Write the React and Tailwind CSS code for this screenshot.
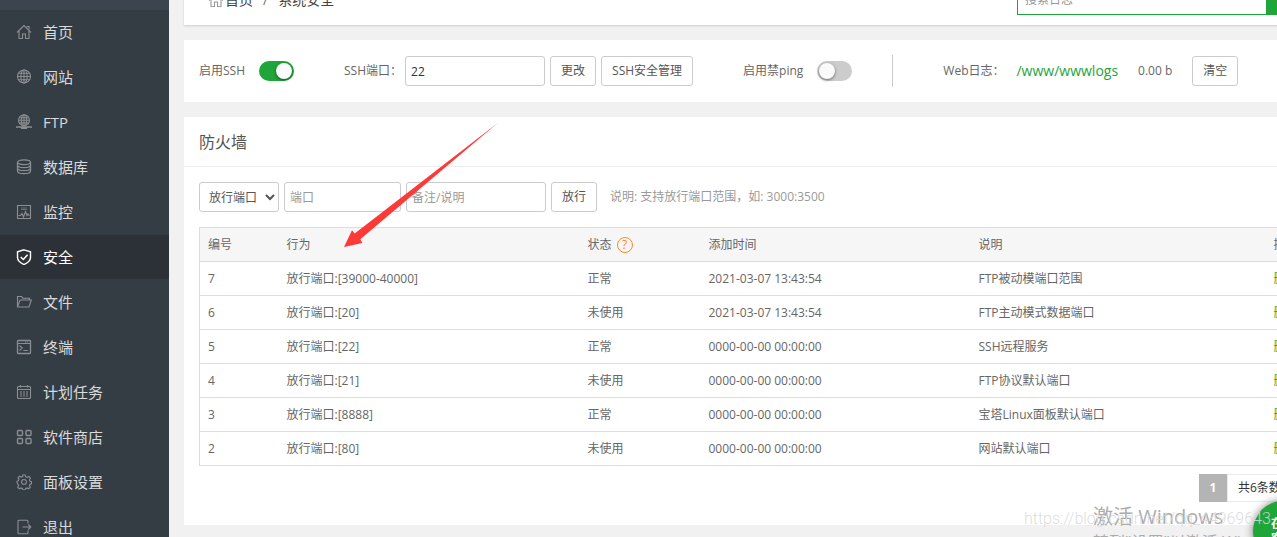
import React from 'react';
import clsx from 'clsx';

const NavIcon = ({ name }) => {
  const shapes = {
    home: (
      <>
        <path d="M1 8.500 8 1.500 15 8.500" />
        <path d="M3 7v7.500h3.500v-4.500h3v4.500H13V7M10.500 2.500H13v3" />
      </>
    ),
    site: (
      <>
        <circle cx="8" cy="7.500" r="6.500" />
        <ellipse cx="8" cy="7.500" rx="3.200" ry="6.500" />
        <path d="M1.500 7.500h13M8 1v13M2.500 4.300h11M2.500 10.700h11" />
      </>
    ),
    ftp: (
      <>
        <circle cx="8" cy="6.300" r="5.500" />
        <ellipse cx="8" cy="6.300" rx="2.700" ry="5.500" />
        <path d="M2.700 6.300h10.600M8 1v11M3.500 3.800h9M3.500 8.900h9" />
        <path d="M0 13h16M5 14.200h6" strokeWidth="1.500" />
      </>
    ),
    database: (
      <g strokeWidth="1.300">
        <ellipse cx="8" cy="3.200" rx="6.500" ry="2.400" />
        <path d="M1.500 3.200v9c0 1.300 2.900 2.400 6.500 2.400s6.500-1.100 6.500-2.400v-9" />
        <path d="M1.500 6.200c0 1.300 2.900 2.400 6.500 2.400s6.500-1.100 6.500-2.400M1.500 9.200c0 1.300 2.900 2.400 6.500 2.400s6.500-1.100 6.500-2.400" />
      </g>
    ),
    monitor: (
      <>
        <path d="M1.500 1.500h13v13h-13z" />
        <path d="M5 4h6M5 5.500h6" opacity=".6" />
        <path d="M2.500 11.500h2l1.500-2 1.500 3.500 2-5.500 1.500 4 1-1.500 1.500 2" />
      </>
    ),
    shield: (
      <>
        <path d="M8 .8 14.500 2.800v5.700c0 3.200-2.700 5.300-6.500 7.100-3.800-1.800-6.500-3.900-6.500-7.100V2.800z" strokeWidth="1.400" />
        <path d="m4.700 8 2.600 2.500 4.300-4.800" strokeWidth="1.500" />
      </>
    ),
    folder: (
      <path d="M1.500 13V2.500h4l1.300 1.700h6.700V6M1.500 13 4 6h11.300L13 13z" />
    ),
    terminal: (
      <>
        <rect x="1.500" y="1.500" width="13" height="13" rx=".8" strokeWidth="1.300" />
        <path d="M1.500 4.500h13M3.500 6.500 6.300 9l-2.800 2.500M7.300 11.500h4.500M9 3h1M11 3h1" />
      </>
    ),
    calendar: (
      <>
        <rect x="1.500" y="2.500" width="13" height="12" rx="1" />
        <path d="M1.500 5.500h13M4.500 1v2.500M11.500 1v2.500" />
        <path d="M4 8h8M4 10h8M4 12h8" strokeDasharray="2 1" />
      </>
    ),
    apps: (
      <g strokeWidth="1.400">
        <rect x="1.500" y="1.500" width="5" height="5" rx="1" />
        <rect x="10" y="1.500" width="5" height="5" rx="1" />
        <rect x="1.500" y="9.500" width="5" height="5" rx="1" />
        <rect x="10" y="9.500" width="5" height="5" rx="1" />
      </g>
    ),
    gear: (
      <>
        <path d="M6.800 1h2.400l.5 1.800 1.400.6 1.700-.9 1.600 1.700-.9 1.600.5 1.400 1.500.4v2.200l-1.500.5-.6 1.300.9 1.600-1.600 1.600-1.600-.9-1.400.6-.5 1.600H6.800l-.5-1.600-1.400-.6-1.600.9-1.600-1.600.9-1.600-.6-1.300L1 8.900V7.300l1.300-.5.6-1.400L2 3.800l1.600-1.600 1.600.9 1.400-.6z" />
        <circle cx="8" cy="7.900" r="2.400" />
      </>
    ),
    exit: (
      <path d="M12 4.500V2.200a1 1 0 0 0-1-1H3a1 1 0 0 0-1 1v11.600a1 1 0 0 0 1 1h8a1 1 0 0 0 1-1v-2.300M6.500 8h8.300M12.300 5.500 14.800 8l-2.500 2.500" />
    ),
  };
  return (
    <svg viewBox="0 0 16 16" className="size-4 shrink-0" fill="none" stroke="currentColor" strokeWidth="1.1" aria-hidden="true">
      {shapes[name]}
    </svg>
  );
};

const navItems = [
  { icon: 'home', label: '首页' },
  { icon: 'site', label: '网站' },
  { icon: 'ftp', label: 'FTP' },
  { icon: 'database', label: '数据库' },
  { icon: 'monitor', label: '监控' },
  { icon: 'shield', label: '安全', active: true },
  { icon: 'folder', label: '文件' },
  { icon: 'terminal', label: '终端' },
  { icon: 'calendar', label: '计划任务' },
  { icon: 'apps', label: '软件商店' },
  { icon: 'gear', label: '面板设置' },
  { icon: 'exit', label: '退出' },
];

const rules = [
  { id: 7, port: '39000-40000', status: '正常', time: '2021-03-07 13:43:54', note: 'FTP被动模端口范围' },
  { id: 6, port: '20', status: '未使用', time: '2021-03-07 13:43:54', note: 'FTP主动模式数据端口' },
  { id: 5, port: '22', status: '正常', time: '0000-00-00 00:00:00', note: 'SSH远程服务' },
  { id: 4, port: '21', status: '未使用', time: '0000-00-00 00:00:00', note: 'FTP协议默认端口' },
  { id: 3, port: '8888', status: '正常', time: '0000-00-00 00:00:00', note: '宝塔Linux面板默认端口' },
  { id: 2, port: '80', status: '未使用', time: '0000-00-00 00:00:00', note: '网站默认端口' },
];

const Button = ({ children, className }) => (
  <button type="button" className={clsx('h-[30px] shrink-0 rounded-[3px] border border-[#ccc] bg-white px-2.5 text-[#555] hover:bg-gray-100', className)}>
    {children}
  </button>
);

const Switch = ({ id, defaultChecked }) => (
  <input
    id={id}
    type="checkbox"
    role="switch"
    defaultChecked={defaultChecked}
    className="relative ml-3.5 h-5 w-[35px] shrink-0 cursor-pointer appearance-none rounded-full bg-[#ccc] before:absolute before:top-0.5 before:left-0.5 before:size-4 before:rounded-full before:bg-[#fafafa] before:shadow-[0_1px_3px_rgba(0,0,0,0.5)] checked:bg-[#20a53a] checked:before:left-[17px]"
  />
);

const inputStyle = 'h-[30px] shrink-0 rounded-[3px] border border-[#ccc] bg-white px-[5px] placeholder:text-[#999]';

const Sidebar = () => (
  <aside className="w-[169px] shrink-0 border-t-[10px] border-[#3c444d] bg-[#353d44]">
    <nav className="flex flex-col gap-px">
      {navItems.map((item) => (
        <a
          key={item.label}
          href="#"
          className={clsx(
            'flex h-11 items-center gap-[11px] pl-4 text-[15px] leading-5',
            item.active ? 'bg-[#2c3138] text-white' : 'text-[#8b8f93]'
          )}
        >
          <NavIcon name={item.icon} />
          <span className={item.active ? 'text-white' : 'text-[#d8dadc]'}>{item.label}</span>
        </a>
      ))}
    </nav>
  </aside>
);

const TopBar = () => (
  <header className="-mt-[25px] flex h-[50px] items-center bg-white pl-6 text-sm text-[#444] shadow-[0_1px_2px_rgba(0,0,0,0.15)]">
    <span className="text-[#999]"><NavIcon name="home" /></span>
    <a href="#" className="ml-px">首页</a>
    <span className="mx-2.5 text-[#777]">/</span>
    <span>系统安全</span>
    <form className="ml-auto flex h-[30px] text-xs">
      <input aria-label="搜索日志" placeholder="搜索日志" className="w-[250px] border border-[#20a53a] px-[7px] placeholder:text-[#999]" />
      <button type="button" aria-label="搜索" className="w-10 bg-[#20a53a]" />
    </form>
    <span className="w-[15px]" />
  </header>
);

const SshBar = () => (
  <section className="mt-[15px] flex h-[62px] items-center bg-white px-[15px]">
    <label htmlFor="ssh-on">启用SSH</label>
    <Switch id="ssh-on" defaultChecked />
    <label htmlFor="ssh-port" className="ml-[50px]">SSH端口：</label>
    <input id="ssh-port" defaultValue="22" className={clsx(inputStyle, 'ml-[3px] w-[140px] text-[#333]')} />
    <Button className="ml-[5px]">更改</Button>
    <Button className="ml-[5px]">SSH安全管理</Button>
    <label htmlFor="ping-off" className="ml-[50px]">启用禁ping</label>
    <Switch id="ping-off" />
    <span className="ml-10 h-8 w-px bg-[#ccc]" />
    <span className="ml-[50px]">Web日志：</span>
    <a href="#" className="ml-3 text-sm text-[#20a53a]">/www/wwwlogs</a>
    <span className="ml-5">0.00 b</span>
    <Button className="ml-5">清空</Button>
  </section>
);

const Firewall = () => (
  <section className="mt-[15px] bg-white pb-[23px]">
    <h1 className="border-b border-[#eee] px-[15px] pt-3.5 pb-3 text-base leading-[23px] text-[#555]">防火墙</h1>
    <div className="px-[15px] pt-[15px]">
      <form className="flex items-center gap-[5px]">
        <select aria-label="类型" className="h-[30px] w-20 shrink-0 rounded-[3px] border border-[#ccc] bg-white px-[5px] text-[#555]">
          <option>放行端口</option>
        </select>
        <input aria-label="端口" placeholder="端口" className={clsx(inputStyle, 'w-[117px]')} />
        <input aria-label="备注/说明" placeholder="备注/说明" className={clsx(inputStyle, 'w-[140px]')} />
        <Button>放行</Button>
        <span className="ml-2 text-[#999]">说明: 支持放行端口范围，如: 3000:3500</span>
      </form>

      <table className="mt-[15px] w-full table-fixed border-collapse border border-[#ddd] text-left">
        <colgroup>
          <col className="w-[79px]" />
          <col className="w-[301px]" />
          <col className="w-[121px]" />
          <col className="w-[270px]" />
          <col className="w-[295px]" />
          <col />
        </colgroup>
        <thead className="bg-[#f6f6f6]">
          <tr className="h-[34px] border-b border-[#ddd] *:px-2 *:font-normal">
            <th>编号</th>
            <th>行为</th>
            <th>
              <span className="flex items-center gap-[5px]">
                状态
                <a href="#" aria-label="帮助" className="flex size-4 items-center justify-center rounded-full border border-[#ff8b1f] text-[#ff8b1f]">?</a>
              </span>
            </th>
            <th>添加时间</th>
            <th>说明</th>
            <th>操作</th>
          </tr>
        </thead>
        <tbody>
          {rules.map((rule) => (
            <tr key={rule.id} className="h-[34px] border-b border-[#ddd] *:px-2">
              <td>{rule.id}</td>
              <td>放行端口:[{rule.port}]</td>
              <td>{rule.status}</td>
              <td>{rule.time}</td>
              <td>{rule.note}</td>
              <td><a href="#" className="text-[#20a53a]">删除</a></td>
            </tr>
          ))}
        </tbody>
      </table>

      <div className="mt-2 flex h-7 justify-end">
        <span className="flex w-7 items-center justify-center bg-[#b4b4b4] font-bold text-white">1</span>
        <span className="flex w-20 items-center border border-[#ececec] pl-[10px] text-[#333]">共6条数据</span>
      </div>
    </div>
  </section>
);

// Everything that floats above the page
const Overlays = () => (
  <>
    <svg className="pointer-events-none absolute top-[120px] left-[340px] h-[130px] w-[160px]" viewBox="340 120 160 130" aria-hidden="true">
      <path d="M344 247 352 230.300 354.700 233.500 498 122.700 360.300 239.200 362.300 243z" fill="#fc3a38" />
    </svg>
    <div className="pointer-events-none absolute top-[502px] left-[1093px] whitespace-nowrap text-[#acacac]">
      <p className="text-xl leading-[30px]">激活 Windows</p>
      <p className="text-base leading-5">转到"设置"以激活 Windows。</p>
    </div>
    <button type="button" className="absolute top-[501px] left-[1253px] size-[60px] rounded-full bg-[#20a53a] px-[17px] text-xs leading-[15px] font-bold text-white shadow-[0_0_8px_rgba(0,0,0,0.5)]">
      在线客服
    </button>
    <p className="pointer-events-none absolute top-[509px] left-[1024px] font-[Roboto,sans-serif] text-base leading-5 font-light whitespace-nowrap text-[#d8d8d8]/90">
      https://blog.csdn.net/qq_44969643
    </p>
  </>
);

export default function App() {
  return (
    <div className="relative flex h-screen overflow-hidden bg-[#f1f1f1] font-['Open_Sans','Noto_Sans_CJK_SC',sans-serif] text-xs text-[#666]">
      <Sidebar />
      <main className="min-w-[1168px] flex-1 px-[15px]">
        <TopBar />
        <SshBar />
        <Firewall />
      </main>
      <Overlays />
    </div>
  );
}
